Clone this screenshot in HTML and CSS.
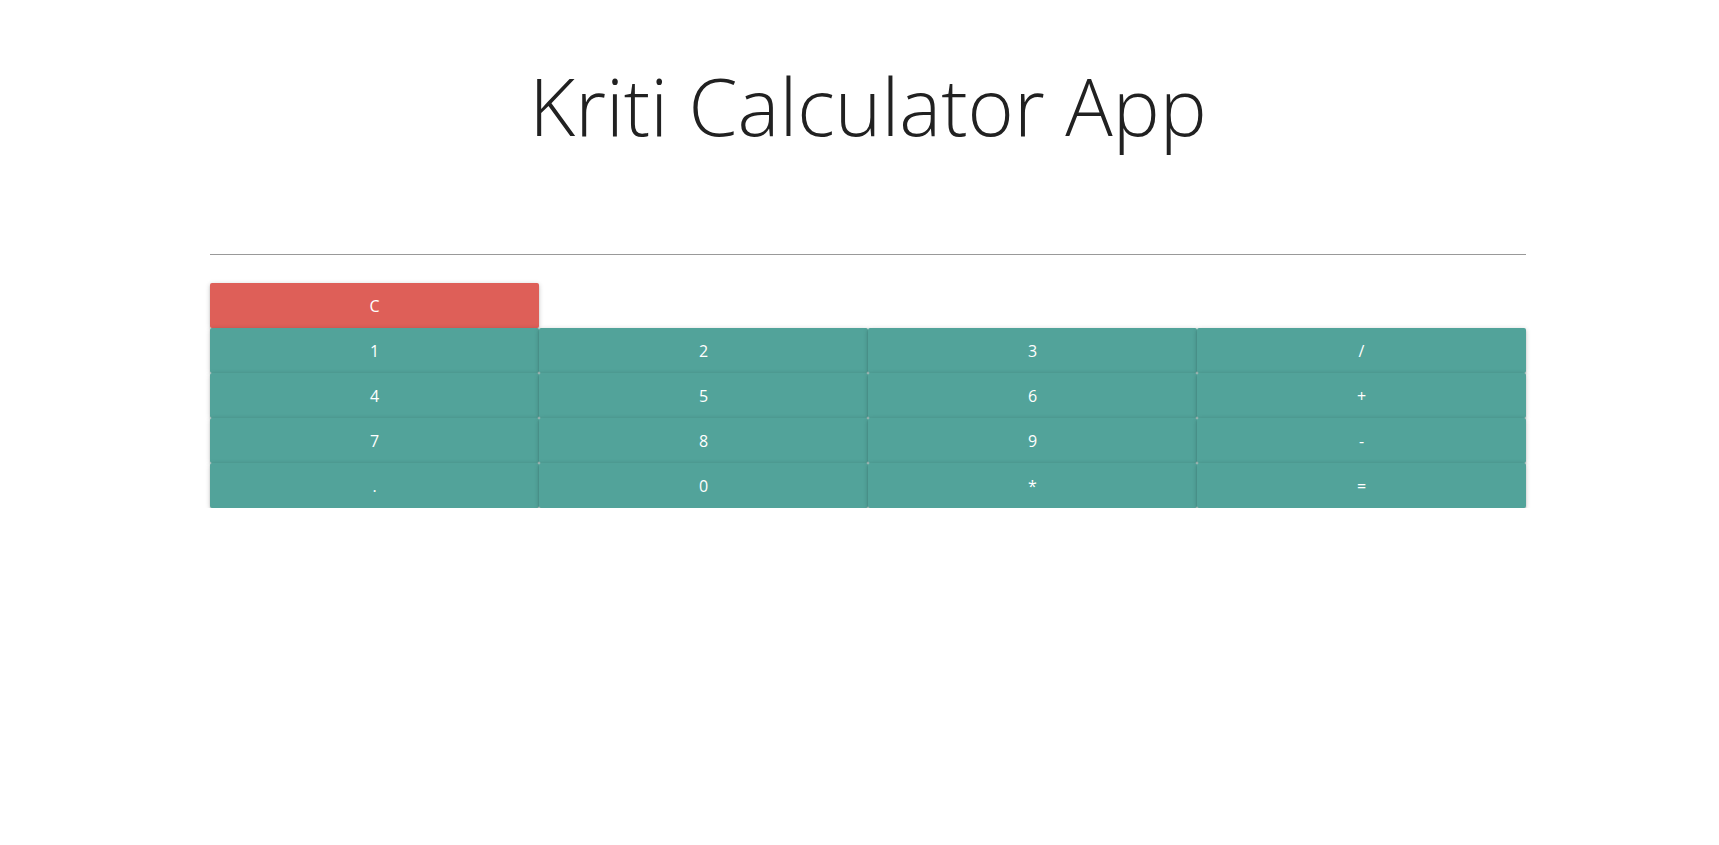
FILE: index.html
```html
<!DOCTYPE html>
<html>
<head>
<meta charset="utf-8">
<title>Kriti Calculator App</title>
<link rel="stylesheet" href="styles.css">
</head>
<body>
<div class="page">
  <div class="container">
    <h1 class="title">Kriti Calculator App</h1>
    <div class="display"></div>
    <div class="pad">
      <button class="btn btn-clear">C</button>
      <span class="spacer"></span>
      <button class="btn">1</button>
      <button class="btn">2</button>
      <button class="btn">3</button>
      <button class="btn">/</button>
      <button class="btn">4</button>
      <button class="btn">5</button>
      <button class="btn">6</button>
      <button class="btn">+</button>
      <button class="btn">7</button>
      <button class="btn">8</button>
      <button class="btn">9</button>
      <button class="btn">-</button>
      <button class="btn">.</button>
      <button class="btn">0</button>
      <button class="btn">*</button>
      <button class="btn">=</button>
    </div>
  </div>
</div>
</body>
</html>
```
FILE: styles.css
```css
html, body {
  margin: 0;
  padding: 0;
  background: #ffffff;
  font-family: "Open Sans", "Noto Sans", sans-serif;
}
.page {
  display: flex;
  justify-content: center;
  padding-left: 17px;
}
.container {
  width: 1316px;
  display: flex;
  flex-direction: column;
}
.title {
  margin: 58px 0 0 0;
  font-size: 79px;
  line-height: 96px;
  font-weight: 300;
  color: #212121;
  text-align: center;
}
.display {
  margin-top: 100px;
  height: 0;
  border-top: 1px solid #999999;
}
.pad {
  margin-top: 28px;
  display: grid;
  grid-template-columns: repeat(4, 1fr);
  grid-auto-rows: 45px;
}
.spacer {
  grid-column: span 3;
}
.btn {
  border: none;
  margin: 0;
  padding: 0;
  border-radius: 2px;
  background: #52a39a;
  color: #ffffff;
  font-family: "Open Sans", "Noto Sans", sans-serif;
  font-size: 16px;
  box-shadow: 0 2px 2px 0 rgba(0,0,0,0.14), 0 3px 1px -2px rgba(0,0,0,0.12), 0 1px 5px 0 rgba(0,0,0,0.2);
}
.btn-clear {
  background: #de5f58;
}
```
